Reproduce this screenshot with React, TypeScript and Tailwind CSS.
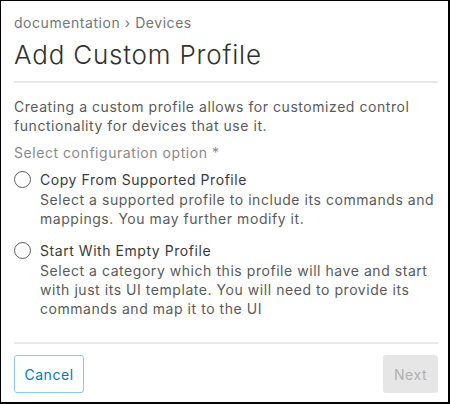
import React from 'react';

const Radio = () => (
  <span className="mt-[1px] inline-block h-[17px] w-[17px] shrink-0 rounded-full border-[1.5px] border-[#5c5c5c]" />
);

export default function App() {
  return (
    <div
      className="flex h-[404px] w-[450px] flex-col border-b-2 border-l border-r-2 border-t border-black bg-white pl-[13px] pr-[10px] text-[#5a5a5a] tracking-[0.55px]"
      style={{ fontFamily: 'Inter, "Noto Sans", sans-serif' }}
    >
      {/* Header */}
      <div className="pt-[12px] text-[14px] leading-[20px] text-[#767676]">documentation › Devices</div>
      <h1 className="mt-[5px] text-[26px] font-light leading-[34px] tracking-[0.8px] text-[#313131]">
        Add Custom Profile
      </h1>
      <div className="mt-[9px] h-[2px] w-full bg-[#e8e8e8]" />

      {/* Body */}
      <p className="mt-[14px] text-[14px] leading-[19px]">
        Creating a custom profile allows for customized control functionality for devices that use it.
      </p>
      <div className="mt-[8px] text-[14px] leading-[20px] text-[#8a8a8a]">Select configuration option *</div>

      <div className="mt-[7px] flex gap-[9px]">
        <Radio />
        <div className="text-[14px] leading-[20px]">
          <div className="text-[#3a3a3a]">Copy From Supported Profile</div>
          <div className="leading-[19px]">
            Select a supported profile to include its commands and mappings. You may further modify it.
          </div>
        </div>
      </div>

      <div className="mt-[13px] flex gap-[9px]">
        <Radio />
        <div className="text-[14px] leading-[20px]">
          <div className="text-[#3a3a3a]">Start With Empty Profile</div>
          <div className="leading-[19px]">
            Select a category which this profile will have and start with just its UI template. You will need to provide
            its commands and map it to the UI
          </div>
        </div>
      </div>

      <div className="mt-auto h-[2px] w-full bg-[#e8e8e8]" />

      {/* Footer */}
      <div className="flex items-center justify-between pb-[9px] pt-[11px]">
        <button className="h-[38px] w-[70px] rounded-[3px] border border-[#8ccbe8] text-[14px] text-[#0079b8]">
          Cancel
        </button>
        <button className="h-[38px] w-[55px] rounded-[3px] bg-[#e6e6e6] text-[14px] text-[#b0b0b0]">Next</button>
      </div>
    </div>
  );
}
